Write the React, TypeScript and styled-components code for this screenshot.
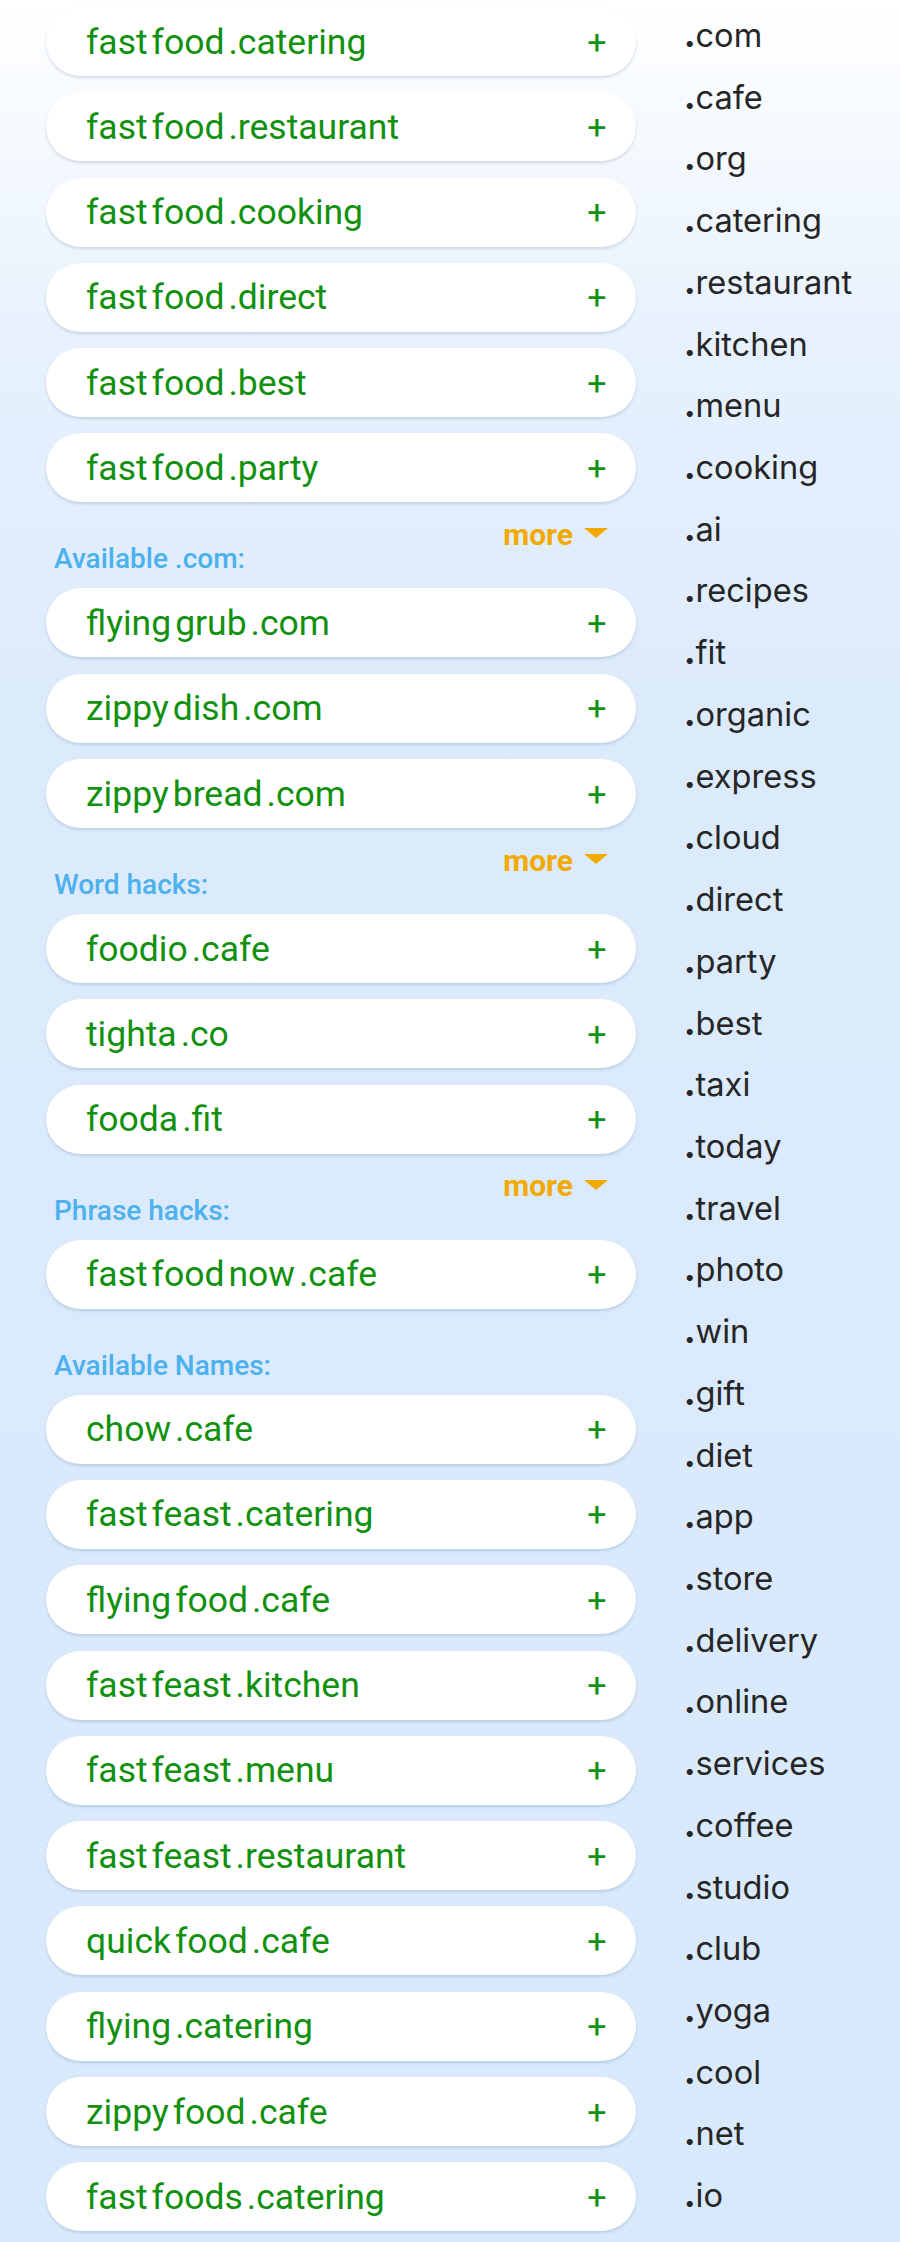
import React from 'react';
import styled, { createGlobalStyle } from 'styled-components';

const Global = createGlobalStyle`
  html, body { margin: 0; padding: 0; }
  body {
    background: linear-gradient(180deg, #ffffff 0px, #e6f1fd 350px, #dcebfc 700px, #d8e9fb 2242px);
    min-height: 2242px;
  }
`;

const Page = styled.div`
  display: flex;
  align-items: flex-start;
  width: 900px;
  height: 2242px;
  padding-left: 46px;
  box-sizing: border-box;
  overflow: hidden;
`;

const LeftCol = styled.div`
  width: 590px;
  flex: none;
  padding-top: 7px;
  display: flex;
  flex-direction: column;
`;

const CardList = styled.div`
  display: flex;
  flex-direction: column;
  gap: 16.3px;
`;

const Card = styled.div`
  height: 69px;
  border-radius: 35px;
  background: #ffffff;
  box-shadow: 0 2px 3px rgba(70, 100, 130, 0.2);
  display: flex;
  align-items: center;
  justify-content: space-between;
  padding: 0 29.5px 0 40px;
  box-sizing: border-box;
  font-family: Roboto, "Liberation Sans", sans-serif;
  font-size: 35.5px;
  color: #12900f;
`;

const Name = styled.span`
  display: flex;
  align-items: baseline;
`;

const Part = styled.span`
  margin-right: 4px;
  &:last-child { margin-right: 0; }
`;

const Plus = styled.span`
  font-size: 34px;
  line-height: 1;
`;

const MoreRow = styled.div`
  height: 24px;
  margin-top: 20px;
  display: flex;
  justify-content: flex-end;
  align-items: center;
  padding-right: 28px;
  font-family: Roboto, "Liberation Sans", sans-serif;
  font-weight: 700;
  font-size: 30px;
  color: #f2a900;
  gap: 11px;
`;

const Triangle = styled.span`
  width: 0;
  height: 0;
  border-left: 12.5px solid transparent;
  border-right: 12.5px solid transparent;
  border-top: 10px solid #f2a900;
  margin-top: -2px;
`;

const Header = styled.div`
  height: 22px;
  line-height: 22px;
  padding-top: 2px;
  margin-bottom: 18px;
  padding-left: 8px;
  font-family: Roboto, "Liberation Sans", sans-serif;
  font-weight: 500;
  font-size: 28px;
  color: #4cb1ec;
`;

const RightCol = styled.div`
  margin-left: 48px;
  padding-top: 5px;
  display: flex;
  flex-direction: column;
  font-family: Inter, "Noto Sans", sans-serif;
  font-size: 32.6px;
  color: #262626;
`;

const Tld = styled.div`
  height: 61.73px;
  line-height: 61.73px;
  white-space: nowrap;
`;

const Dot = styled.span`
  font-weight: 800;
`;

type Group = { header?: string; more: boolean; items: string[][] };

const groups: Group[] = [
  {
    more: true,
    items: [
      ['fast', 'food', '.catering'],
      ['fast', 'food', '.restaurant'],
      ['fast', 'food', '.cooking'],
      ['fast', 'food', '.direct'],
      ['fast', 'food', '.best'],
      ['fast', 'food', '.party'],
    ],
  },
  {
    header: 'Available .com:',
    more: true,
    items: [
      ['flying', 'grub', '.com'],
      ['zippy', 'dish', '.com'],
      ['zippy', 'bread', '.com'],
    ],
  },
  {
    header: 'Word hacks:',
    more: true,
    items: [
      ['foodio', '.cafe'],
      ['tighta', '.co'],
      ['fooda', '.fit'],
    ],
  },
  {
    header: 'Phrase hacks:',
    more: false,
    items: [['fast', 'food', 'now', '.cafe']],
  },
  {
    header: 'Available Names:',
    more: false,
    items: [
      ['chow', '.cafe'],
      ['fast', 'feast', '.catering'],
      ['flying', 'food', '.cafe'],
      ['fast', 'feast', '.kitchen'],
      ['fast', 'feast', '.menu'],
      ['fast', 'feast', '.restaurant'],
      ['quick', 'food', '.cafe'],
      ['flying', '.catering'],
      ['zippy', 'food', '.cafe'],
      ['fast', 'foods', '.catering'],
    ],
  },
];

const tlds = [
  'com', 'cafe', 'org', 'catering', 'restaurant', 'kitchen', 'menu', 'cooking', 'ai',
  'recipes', 'fit', 'organic', 'express', 'cloud', 'direct', 'party', 'best', 'taxi',
  'today', 'travel', 'photo', 'win', 'gift', 'diet', 'app', 'store', 'delivery',
  'online', 'services', 'coffee', 'studio', 'club', 'yoga', 'cool', 'net', 'io',
];

export default function App() {
  return (
    <>
      <Global />
      <Page>
        <LeftCol>
          {groups.map((g, gi) => (
            <React.Fragment key={gi}>
              {g.header && <Header>{g.header}</Header>}
              <CardList>
                {g.items.map((parts, i) => (
                  <Card key={i}>
                    <Name>
                      {parts.map((p, j) => (
                        <Part key={j}>{p}</Part>
                      ))}
                    </Name>
                    <Plus>+</Plus>
                  </Card>
                ))}
              </CardList>
              {gi < groups.length - 1 && (
                <MoreRow>
                  {g.more && (
                    <>
                      <span>more</span>
                      <Triangle />
                    </>
                  )}
                </MoreRow>
              )}
            </React.Fragment>
          ))}
        </LeftCol>
        <RightCol>
          {tlds.map((t) => (
            <Tld key={t}>
              <Dot>.</Dot>
              {t}
            </Tld>
          ))}
        </RightCol>
      </Page>
    </>
  );
}
